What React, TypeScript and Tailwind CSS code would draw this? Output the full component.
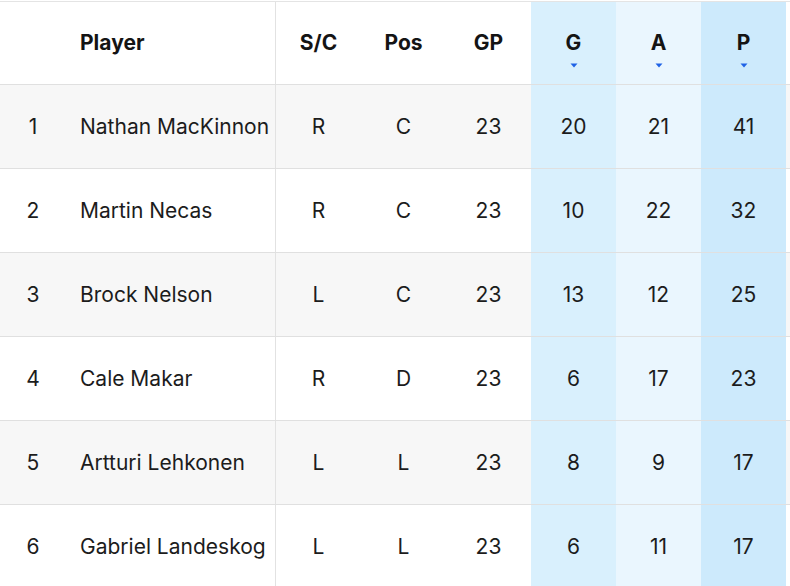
const players = [
  { rank: 1, name: "Nathan MacKinnon", sc: "R", pos: "C", gp: 23, g: 20, a: 21, p: 41 },
  { rank: 2, name: "Martin Necas", sc: "R", pos: "C", gp: 23, g: 10, a: 22, p: 32 },
  { rank: 3, name: "Brock Nelson", sc: "L", pos: "C", gp: 23, g: 13, a: 12, p: 25 },
  { rank: 4, name: "Cale Makar", sc: "R", pos: "D", gp: 23, g: 6, a: 17, p: 23 },
  { rank: 5, name: "Artturi Lehkonen", sc: "L", pos: "L", gp: 23, g: 8, a: 9, p: 17 },
  { rank: 6, name: "Gabriel Landeskog", sc: "L", pos: "L", gp: 23, g: 6, a: 11, p: 17 },
];

const cols = "grid grid-cols-[66px_210px_85px_85px_85px_85px_85px_85px]";

/* ─── SortCaret ─── */

function SortCaret() {
  return (
    <svg
      className="absolute left-1/2 top-[61px] -translate-x-1/2"
      width="8"
      height="5"
      viewBox="0 0 8 5"
    >
      <path d="M0.5 0.5H7.5L4 4.5Z" fill="#1f62e6" />
    </svg>
  );
}

/* ─── HeaderCell ─── */

function HeaderCell({
  label,
  bg = "",
  sorted = false,
  align = "center",
  divider = false,
}: {
  label: string;
  bg?: string;
  sorted?: boolean;
  align?: "left" | "center";
  divider?: boolean;
}) {
  return (
    <div
      className={`relative flex items-center ${
        align === "left" ? "justify-start pl-[14px]" : "justify-center"
      } ${bg} ${divider ? "border-r border-[#e2e2e2]" : ""}`}
    >
      <span className="text-[21px] font-bold text-[#141414]">{label}</span>
      {sorted && <SortCaret />}
    </div>
  );
}

export default function App() {
  return (
    <div className="h-[586px] w-[790px] overflow-hidden bg-white pt-px font-['Inter',sans-serif]">
      <div className="border-t border-[#e4e4e4]">
        {/* header */}
        <div className="border-b border-[#e0e0e0]">
          <div className={`${cols} h-[82px]`}>
            <div />
            <HeaderCell label="Player" align="left" divider />
            <HeaderCell label="S/C" />
            <HeaderCell label="Pos" />
            <HeaderCell label="GP" />
            <HeaderCell label="G" bg="bg-[#d9f0fd]" sorted />
            <HeaderCell label="A" bg="bg-[#eaf6fe]" sorted />
            <HeaderCell label="P" bg="bg-[#cdeafc]" sorted />
          </div>
        </div>

        {/* body */}
        {players.map((pl, i) => (
          <div
            key={pl.rank}
            className={`border-b border-[#e0e0e0] ${i % 2 === 0 ? "bg-[#f7f7f7]" : "bg-white"}`}
          >
            <div className={`${cols} h-[83px] text-[21px] text-[#1c1c1c]`}>
              <div className="flex items-center justify-center">{pl.rank}</div>
              <div className="flex items-center whitespace-nowrap border-r border-[#e2e2e2] pl-[14px]">
                {pl.name}
              </div>
              <div className="flex items-center justify-center">{pl.sc}</div>
              <div className="flex items-center justify-center">{pl.pos}</div>
              <div className="flex items-center justify-center">{pl.gp}</div>
              <div className="flex items-center justify-center bg-[#d9f0fd]">{pl.g}</div>
              <div className="flex items-center justify-center bg-[#eaf6fe]">{pl.a}</div>
              <div className="flex items-center justify-center bg-[#cdeafc]">{pl.p}</div>
            </div>
          </div>
        ))}
      </div>
    </div>
  );
}
